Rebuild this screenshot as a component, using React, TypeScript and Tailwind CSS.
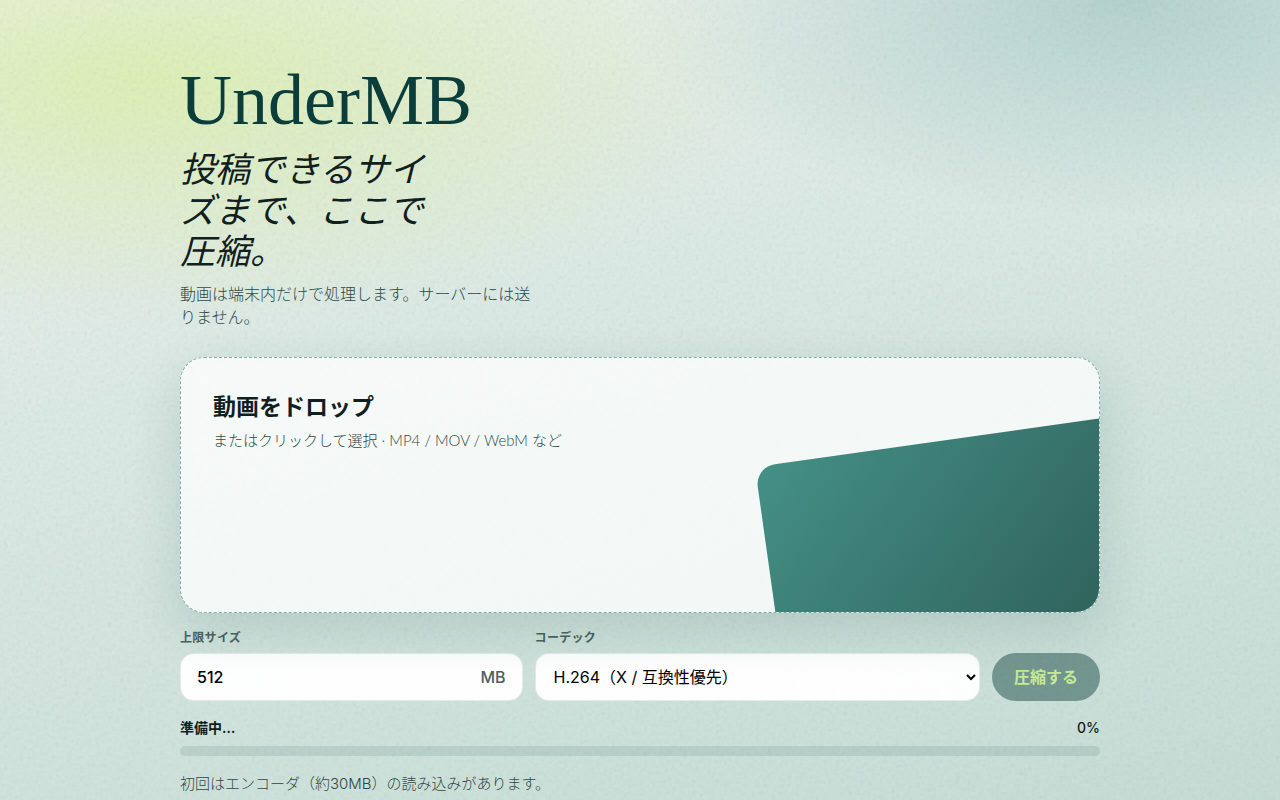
import { useState } from 'react';
import type { ReactNode } from 'react';

const CODECS = [
  { value: 'h264', label: 'H.264（X / 互換性優先）' },
  { value: 'h265', label: 'H.265（高圧縮）' },
];

const Grain = () => (
  <svg className="pointer-events-none absolute inset-0 h-full w-full opacity-15" aria-hidden="true">
    <filter id="grain">
      <feTurbulence type="fractalNoise" baseFrequency="0.25" numOctaves="2" stitchTiles="stitch" />
      <feColorMatrix type="saturate" values="0.3" />
    </filter>
    <rect width="100%" height="100%" filter="url(#grain)" />
  </svg>
);

interface FieldProps {
  id: string;
  label: string;
  children: ReactNode;
}

const Field = ({ id, label, children }: FieldProps) => (
  <div className="flex min-w-0 flex-col gap-1.5">
    <label htmlFor={id} className="text-xs leading-[18px] font-semibold tracking-wide text-[#4a625d]">
      {label}
    </label>
    {children}
  </div>
);

const DropZone = () => (
  <button
    type="button"
    className="relative mt-7 flex min-h-64 w-full flex-col items-start overflow-hidden rounded-3xl border border-dashed border-[#2f7a70]/60 bg-white/75 p-8 text-left shadow-[0_18px_50px_rgba(11,61,58,0.14)]"
  >
    <span className="text-[23px] leading-[34px] font-semibold text-[#10201e]">動画をドロップ</span>
    <span className="mt-1 font-['Lato','Noto_Sans_CJK_JP',sans-serif] text-[15px] leading-6 font-light text-[#2f4843]">
      またはクリックして選択 · MP4 / MOV / WebM など
    </span>
    <span className="absolute -right-[6%] -bottom-[22%] h-[90%] w-[42%] -rotate-8 rounded-[20px] bg-linear-135 from-[#449086] to-[#2c5b55]" />
  </button>
);

interface ProgressProps {
  status: string;
  value: number;
}

const Progress = ({ status, value }: ProgressProps) => (
  <div className="mt-4 flex flex-col gap-2">
    <div className="flex justify-between text-sm leading-[21px] font-semibold text-[#10201e]">
      <span>{status}</span>
      <span className="font-medium">{value}%</span>
    </div>
    <div className="h-2.5 overflow-hidden rounded-full bg-[#0b3d3a]/10">
      <div className="h-full bg-[#0b3d3a]" style={{ width: `${value}%` }} />
    </div>
  </div>
);

export default function App() {
  const [limit, setLimit] = useState('512');
  const [codec, setCodec] = useState('h264');

  return (
    <div
      lang="ja"
      className="relative min-h-screen overflow-hidden bg-[radial-gradient(ellipse_80%_50%_at_12%_10%,rgba(212,240,145,0.62),transparent_60%),radial-gradient(ellipse_65%_45%_at_88%_0%,rgba(60,145,135,0.29),transparent_60%),linear-gradient(165deg,#f0f3f0_0%,#d8e9e3_45%,#c4ddd5_100%)] font-['Inter','Noto_Sans_CJK_JP',sans-serif]"
    >
      <Grain />
      <main className="relative mx-auto w-full max-w-[920px] pt-[60px]">
        <header>
          <h1 className="font-['Liberation_Serif',serif] text-7xl leading-[80px] text-[#0b3d3a]">UnderMB</h1>
          <p className="mt-[9px] max-w-[260px] text-[35px] leading-[41px] text-[#10201e] italic">
            投稿できるサイズまで、ここで圧縮。
          </p>
          <p className="mt-[11px] max-w-[360px] text-base leading-[23px] font-light text-[#2f4843]">
            動画は端末内だけで処理します。サーバーには送りません。
          </p>
        </header>

        <DropZone />

        <form className="mt-4 grid grid-cols-[1fr_1.3fr_auto] items-end gap-3">
          <Field id="limit" label="上限サイズ">
            <div className="flex h-12 items-center rounded-[14px] border border-[#0b3d3a]/10 bg-white/95 px-4 font-medium">
              <input
                id="limit"
                type="text"
                inputMode="numeric"
                value={limit}
                onChange={(e) => setLimit(e.target.value)}
                className="min-w-0 flex-1 bg-transparent text-base text-black outline-none"
              />
              <span className="text-base text-[#4a625d]">MB</span>
            </div>
          </Field>
          <Field id="codec" label="コーデック">
            <select
              id="codec"
              value={codec}
              onChange={(e) => setCodec(e.target.value)}
              className="h-12 w-full rounded-[14px] border border-[#0b3d3a]/10 bg-white/95 pl-3.5 text-base text-black"
            >
              {CODECS.map((c) => (
                <option key={c.value} value={c.value}>
                  {c.label}
                </option>
              ))}
            </select>
          </Field>
          <button
            type="submit"
            disabled
            className="h-12 rounded-full bg-[#0b3d3a]/45 px-[22px] text-base font-bold text-[#c4ea94]"
          >
            圧縮する
          </button>
        </form>

        <Progress status="準備中…" value={0} />

        <p className="mt-4 text-[15px] leading-6 font-light text-[#2f4843]">
          初回はエンコーダ（約30MB）の読み込みがあります。
        </p>
      </main>
    </div>
  );
}
